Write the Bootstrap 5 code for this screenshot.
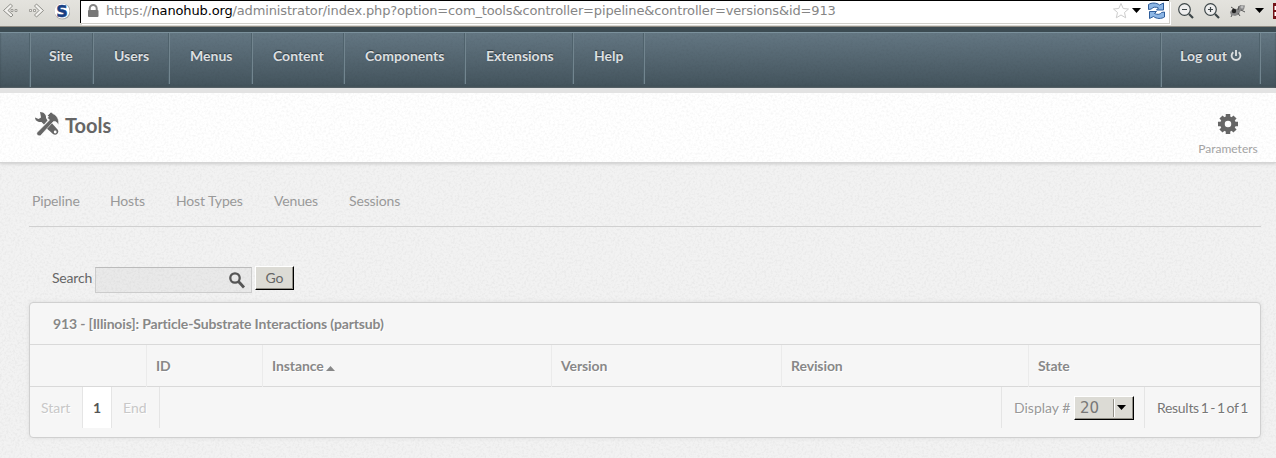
<!DOCTYPE html>
<html lang="en">
<head>
<meta charset="utf-8">
<title>Tools</title>
<link rel="stylesheet" href="https://cdn.jsdelivr.net/npm/bootstrap@5.3.0/dist/css/bootstrap.min.css">
<style>
:root{--grain:url("data:image/svg+xml,%3Csvg xmlns='http://www.w3.org/2000/svg' width='200' height='200'%3E%3Cfilter id='n'%3E%3CfeTurbulence type='fractalNoise' baseFrequency='.45' numOctaves='2' stitchTiles='stitch'/%3E%3CfeColorMatrix values='0 0 0 0 0 0 0 0 0 0 0 0 0 0 0 .09 0 0 0 -.038'/%3E%3C/filter%3E%3Crect width='200' height='200' filter='url(%23n)'/%3E%3C/svg%3E")}
body{font:14px/20px Lato,"Liberation Sans",sans-serif;color:#666;background:var(--grain) #f2f2f2;height:458px;overflow:hidden}
svg{display:block;flex:none}
.chrome{height:27px;background:linear-gradient(#e4e3de,#d9d8d2);border-bottom:1px solid #8f8b83}
.address{width:1089px;height:23px;background:#fff;border:1px solid #000;border-width:1px 0 0 1px;box-shadow:1px 1px #d0cfca,2px 2px #fff;margin-left:10px;font:13px/20px "DejaVu Sans",sans-serif;color:#858585}
.address b{font-weight:400;color:#000}
.url{letter-spacing:-.14px}
.menubar{height:61px;border-top:5px solid #3c4b52;background:var(--grain),linear-gradient(#647783,#43535c);box-shadow:inset 0 1px #7b919c,inset 0 -2px 2px #3c4a52;color:#dcdfe0;font-weight:700;text-shadow:0 -1px 1px #2d383e}
.menubar .items{display:grid;grid-template-columns:63px 76px 83px 92px 121px 108px 71px;margin-left:30px}
.menubar .tab{border-left:1px solid #72858f;box-shadow:-1px 0 #4f626c;height:51px;margin-top:1px;padding:13px 0 0 20px;white-space:nowrap}
.menubar .tab.edge{padding-left:18px;height:54px}
.titlebar{height:75px;background:var(--grain) #fff;border-top:5px solid #e3e3e3;border-bottom:1px solid #d5d5d5;box-shadow:0 1px 3px #ccc}
.titlebar h1{font-size:20px;line-height:24px;font-weight:700;letter-spacing:0}
.params{font-size:12px;line-height:16px;color:#a3a3a3;width:60px}
.subnav{margin:0 15px 0 29px;height:64px;border-bottom:1px solid #d0d0d0;color:#999;letter-spacing:-.15px}
.subnav .links{grid-template-columns:78px 66px 98px 75px 80px;padding:28px 0 0 3px}
.subnav a{color:inherit;text-decoration:none}
.finder{height:26px;margin:39px 0 0 52px}
.finder label{letter-spacing:-.2px;width:40px;margin-top:2px}
.field{width:157px;height:26px;border:1px solid #ccc;border-top-color:#bbb;background:var(--grain) #e9e9e9;margin:1px 3px 0 3px}
.bevel{background:#dcdbd5;border:1px solid;border-color:#fff #000 #000 #fff;box-shadow:inset -1px -1px #918f87;border-radius:0}
.go{width:39px;height:24px;font-size:14px;line-height:22px;color:#666;padding:0}
.panel{margin:10px 15px 0 29px;height:136px;border:1px solid #d0d0d0;border-radius:4px;background:#f6f6f6;box-shadow:0 0 4px #ddd;color:#888;text-shadow:1px 1px #fff}
.heading{height:42px;border-bottom:1px solid #d9d9d9;line-height:42px;padding-left:23px;font-weight:700;letter-spacing:-.155px}
.cols{display:grid;grid-template-columns:116px 116px 289px 230px 247px 1fr;height:42px;border-bottom:1px solid #d9d9d9;line-height:42px;font-weight:700;letter-spacing:-.1px}
.cols div+div{border-left:1px solid #ebebeb;padding-left:9px}
.pager{line-height:42px;height:41px}
.pager>*{border-right:1px solid #e5e5e5;white-space:nowrap}
.off{color:#c8c8c8}
.pick{width:60px;height:24px;font:15px/23px "DejaVu Sans",sans-serif;color:#777;text-shadow:none;margin:9px 0 0 -1px}
.results{width:115px;padding-left:12px;color:#777;letter-spacing:-.3px;word-spacing:-1.500px}
</style>
</head>
<body>
<div class="chrome d-flex">
  <svg width="70" height="24" viewBox="0 0 70 24">
    <g fill="#f3f2ef" stroke="#85847f" stroke-width=".9"><path d="m3.500 10.500 7-6.500 2 2-4.500 4.500 5 4.500-2 2zM43.500 10.500 36.500 4l-2 2 4.500 4.500-4.500 4.500 2 2z"/><path d="M11 9.500h2v2h-2zM15 9.500h2v2h-2zM29.500 9.500h2v2h-2zM33.500 9.500h2v2h-2z" stroke-width=".7"/></g>
    <circle cx="62.500" cy="11.500" r="8" fill="#aaa"/><circle cx="62" cy="11" r="7.500" fill="#fff"/>
    <text x="56.300" y="16.500" font-family="DejaVu Sans" font-weight="700" font-size="16" fill="#183f83" stroke="#183f83" stroke-width=".5">S</text>
  </svg>
  <div class="address d-flex">
    <svg width="25" height="22" viewBox="0 0 25 22"><path d="M8.700 10V7.500a3.500 3.500 0 0 1 7 0V10" fill="none" stroke="#858585" stroke-width="2"/><rect x="7" y="9" width="10.500" height="7" rx="1" fill="#777"/></svg>
    <span class="url">https://<b>nanohub.org</b>/administrator/index.php?option=com_tools&amp;controller=pipeline&amp;controller=versions&amp;id=913</span>
    <svg class="ms-auto" width="56" height="22" viewBox="1 0 56 22"><path d="m9 2.500 2.200 5 5.300.5-4 3.500 1.200 5.300L9 14l-4.700 2.800 1.200-5.300-4-3.500 5.300-.5z" fill="#fff" stroke="#ccc"/><path d="M20 7h9l-4.500 5z" fill="#000"/><g fill="#8cb6e5" stroke="#2e5d9b"><path d="M36.500 8.500V3.500c3-2 8-2 11 .5l4-2v7h-7l2-2c-3-1.500-6-1-7 1z"/><path d="M52.500 11v5c-3 2-8 2-11-.5l-4 2v-7h7l-2 2c3 1.500 6 1 7-1z"/></g></svg>
  </div>
  <svg width="107" height="24" viewBox="1169 0 107 24">
    <g fill="#eee" stroke="#3d4648" stroke-width="1.200"><circle cx="1184.500" cy="9.500" r="5.800"/><circle cx="1210.500" cy="9.500" r="5.800"/><path d="m1189 14 4 4M1215 14l4 4" stroke-width="2.200"/><path d="M1182 9.500h5M1208 9.500h5M1210.500 7v5"/></g>
    <path d="m1230 12 3-3.500 4 .5 3-4 5 .5-1 4-4 2-1 3-4 1.500-4-1z" fill="#888"/><path d="m1231 7 3 2M1239 6l-1 4M1241 10l4 2M1232 15l-1 2M1238 13l2 3" stroke="#555"/><circle cx="1234" cy="11" r="2.200" fill="#222"/><circle cx="1242" cy="7" r="1.500" fill="#bbb"/>
    <path d="M1255 8h9l-4.500 5z" fill="#000"/><path d="M1273 3h3v16h-3z" fill="#741217"/><path d="M1274.500 6h1.500v4h-1.500zM1274.500 12h1.500v4h-1.500z" fill="#fff"/>
  </svg>
</div>
<nav class="menubar d-flex">
  <div class="items">
    <div class="tab edge">Site</div><div class="tab">Users</div><div class="tab">Menus</div><div class="tab">Content</div><div class="tab">Components</div><div class="tab">Extensions</div><div class="tab">Help</div>
  </div>
  <div class="tab p-0"></div>
  <div class="tab edge ms-auto d-flex" style="width:99px">Log out
    <svg style="margin:4px 0 0 3px" width="12" height="12" viewBox="0 0 12 12" fill="none" stroke="#dcdfe0" stroke-width="1.900"><path d="M3.300 2.200a4.400 4.400 0 1 0 5.400 0M6 0v6"/></svg>
  </div>
  <div class="tab p-0" style="width:16px"></div>
</nav>
<header class="titlebar d-flex justify-content-between">
  <div class="d-flex ms-4 ps-2">
    <svg style="margin:19px 6px 0 3px" width="24" height="24" viewBox="0 0 24 24" fill="#666"><path d="m12 12 3-3 7.500 8.500c2.500 3-1.500 7-4.500 4.500L9.500 14.500z"/><path d="M0 5.500 3.500 7 6 5.500 5.500 2.500 5 0c4 0 6.500 3 6 6l1.500 2.500-3.500 4L6.500 10C3 10.500 0 8.500 0 5.500z"/><path d="M2.500 20 14.500 8 12.500 6l1-1.500L12.500 3.500 16 0l2.500 2c3.500 1.500 6 6 5 11-1.500-3-3-4-5-3.500L17 11 7 22c-2.500 4-7 .5-4.500-2z" stroke="#fff" stroke-width=".6"/><circle cx="20.200" cy="20" r="1.400" fill="#fff"/></svg>
    <h1 class="mb-0" style="margin-top:20px">Tools</h1>
  </div>
  <div class="params text-center" style="margin:20px 18px 0 0">
    <svg class="mx-auto" width="22" height="22" viewBox="-11 -11 22 22" fill="none" stroke="#666"><circle r="5.500" stroke-width="4.500"/><path stroke-width="4.500" d="M0-10v4M0 10V6M-10 0h4M10 0H6M-7-7l3 3M7 7 4 4M-7 7l3-3M7-7 4-4"/></svg>
    <div style="margin-top:6px">Parameters</div>
  </div>
</header>
<nav class="subnav">
  <div class="links d-grid"><a>Pipeline</a><a>Hosts</a><a>Host Types</a><a>Venues</a><a>Sessions</a></div>
</nav>
<form class="finder d-flex">
  <label>Search</label>
  <div class="field d-flex justify-content-end"><svg style="margin:4px 6px 0 0" width="16" height="17" viewBox="0 0 16 17" fill="none" stroke="#555"><circle cx="6" cy="6" r="4.700" stroke-width="2.300"/><path d="m9.500 9.500 5.500 6" stroke-width="2.800"/></svg></div>
  <button type="button" class="bevel go">Go</button>
</form>
<section class="panel">
  <div class="heading">913 - [Illinois]: Particle-Substrate Interactions (partsub)</div>
  <div class="cols"><div></div><div>ID</div><div>Instance <svg class="d-inline" style="margin:3px 0 0 -1px" width="9" height="5" viewBox="0 0 9 5"><path d="m0 5 4.500-5L9 5z" fill="#888"/></svg></div><div>Version</div><div>Revision</div><div>State</div></div>
  <div class="pager d-flex">
    <span class="off" style="width:53px;padding-left:11px">Start</span>
    <span class="bg-white text-center fw-bold" style="width:29px;color:#555">1</span>
    <span class="off" style="width:48px;padding-left:11px">End</span>
    <span class="flex-grow-1"></span>
    <div class="d-flex" style="width:143px;padding-left:12px;color:#999"><span style="width:61px">Display #</span>
      <div class="bevel pick d-flex"><span style="padding-left:5px;width:38px">20</span><svg width="20" height="22" viewBox="0 0 20 22"><path d="M.5 2v18" stroke="#918f87"/><path d="M1.500 2v18" stroke="#fff"/><path d="M4 8h9l-4.500 5z" fill="#000"/></svg></div>
    </div>
    <span class="results border-0">Results 1 - 1 of 1</span>
  </div>
</section>
<script src="https://cdn.jsdelivr.net/npm/bootstrap@5.3.0/dist/js/bootstrap.bundle.min.js"></script>
</body>
</html>
